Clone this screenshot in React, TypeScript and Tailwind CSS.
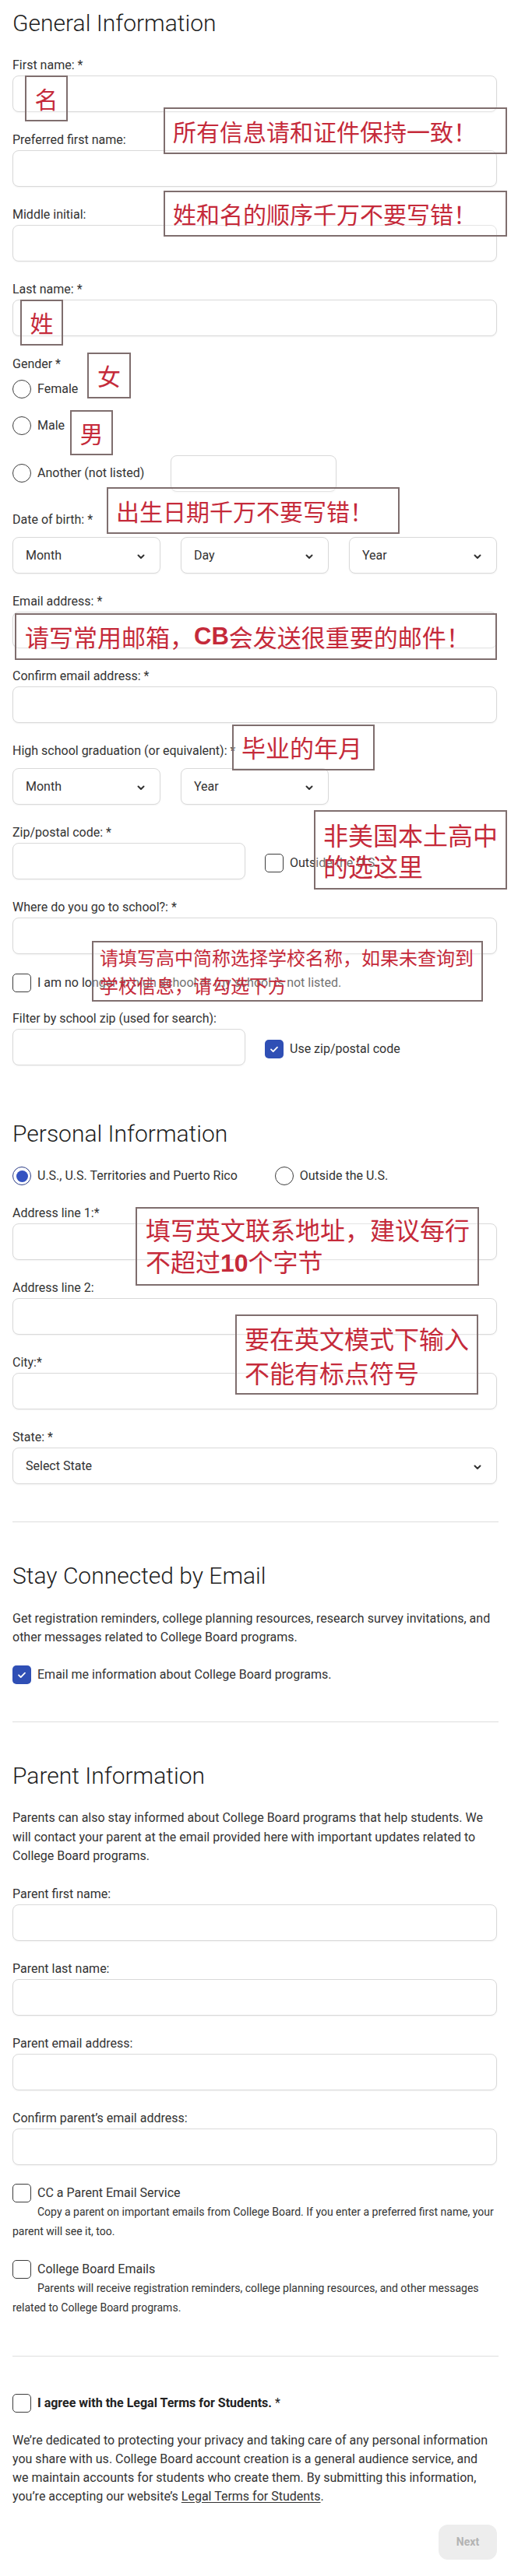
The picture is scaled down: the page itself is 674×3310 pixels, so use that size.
import React from 'react'

function Label({ children }: { children: React.ReactNode }) {
  return <div className="h-6 text-[16px] leading-6 text-[#333]">{children}</div>
}

function TextBox({ className = 'w-full' }: { className?: string }) {
  return (
    <input
      type="text"
      className={`mt-px block h-[47px] rounded-lg border border-[#d9d9d9] bg-white shadow-[0_1px_2px_rgba(0,0,0,0.05)] outline-none ${className}`}
    />
  )
}

function Field({ label, className = 'mt-6' }: { label: string; className?: string }) {
  return (
    <div className={className}>
      <Label>{label}</Label>
      <TextBox />
    </div>
  )
}

function Chevron() {
  return (
    <svg width="10" height="7" viewBox="0 0 10 7" className="mt-1 shrink-0">
      <path d="M1.5 1.5l3.5 3.5 3.5-3.5" fill="none" stroke="#333" strokeWidth="2" strokeLinecap="round" strokeLinejoin="round" />
    </svg>
  )
}

function SelectBox({ label, className = 'w-full' }: { label: string; className?: string }) {
  return (
    <div
      className={`flex h-[47px] items-center justify-between rounded-lg border border-[#d9d9d9] bg-white pl-4 pr-[19px] text-[16px] text-[#333] shadow-[0_1px_2px_rgba(0,0,0,0.05)] ${className}`}
    >
      <span>{label}</span>
      <Chevron />
    </div>
  )
}

function Box({ checked = false }: { checked?: boolean }) {
  if (checked) {
    return (
      <span className="flex h-6 w-6 shrink-0 items-center justify-center rounded-[5px] bg-[#2f4fb5]">
        <svg width="14" height="14" viewBox="0 0 14 14">
          <path d="M3 7.4l2.7 2.7L11 4.6" fill="none" stroke="#fff" strokeWidth="1.8" strokeLinecap="round" strokeLinejoin="round" />
        </svg>
      </span>
    )
  }
  return <span className="h-6 w-6 shrink-0 rounded-[5px] border-[1.5px] border-[#3d3d3d] bg-white" />
}

function Radio({ checked = false }: { checked?: boolean }) {
  return (
    <span
      className={`flex h-6 w-6 shrink-0 items-center justify-center rounded-full border-[1.5px] ${
        checked ? 'border-[#2b3c86]' : 'border-[#3d3d3d]'
      }`}
    >
      {checked && <span className="h-[15px] w-[15px] rounded-full bg-[#3553c1]" />}
    </span>
  )
}

function Option({ children }: { children: React.ReactNode }) {
  return <span className="text-[16px] leading-6 text-[#333]">{children}</span>
}

function Heading({ children, className = '' }: { children: React.ReactNode; className?: string }) {
  return <h2 className={`h-9 text-[30px] font-light leading-9 text-[#1f1f1f] ${className}`}>{children}</h2>
}

function Note({ className, children }: { className: string; children: React.ReactNode }) {
  return (
    <div
      className={`absolute flex border-2 border-[#7f6e6e] bg-white/30 font-['Noto_Sans_CJK_SC',sans-serif] text-[#c52a3a] ${className}`}
    >
      {children}
    </div>
  )
}

const bold = "font-['Liberation_Sans',sans-serif] font-bold"

export default function App() {
  return (
    <div className="relative h-[3310px] w-[674px] overflow-hidden bg-white font-['Roboto','Noto_Sans_CJK_SC',sans-serif]">
      <div className="w-[638px] pl-4 pt-3">
        <Heading>General Information</Heading>

        <Field label="First name: *" />
        <Field label="Preferred first name:" />
        <Field label="Middle initial:" />
        <Field label="Last name: *" />

        <div className="mt-6">
          <Label>Gender *</Label>
          <div className="mt-2 flex flex-col">
            <div className="mb-[23px] flex h-6 items-center gap-2">
              <Radio />
              <Option>Female</Option>
            </div>
            <div className="mb-[25px] flex h-6 items-center gap-2">
              <Radio />
              <Option>Male</Option>
            </div>
            <div className="flex items-center gap-2">
              <Radio />
              <Option>Another (not listed)</Option>
              <TextBox className="ml-[26px] w-[213px]" />
            </div>
          </div>
        </div>

        <div className="mt-6">
          <Label>Date of birth: *</Label>
          <div className="mt-[10px] flex gap-[26px]">
            <SelectBox label="Month" className="w-[190px]" />
            <SelectBox label="Day" className="w-[190px]" />
            <SelectBox label="Year" className="w-[190px]" />
          </div>
        </div>

        <Field label="Email address: *" />
        <Field label="Confirm email address: *" />

        <div className="mt-6">
          <Label>High school graduation (or equivalent): *</Label>
          <div className="mt-[10px] flex gap-[26px]">
            <SelectBox label="Month" className="w-[190px]" />
            <SelectBox label="Year" className="w-[190px]" />
          </div>
        </div>

        <div className="mt-6">
          <Label>Zip/postal code: *</Label>
          <div className="flex items-start">
            <TextBox className="w-[299px]" />
            <div className="ml-[25px] mt-[15px] flex items-center gap-2">
              <Box />
              <Option>Outside the U.S.</Option>
            </div>
          </div>
        </div>

        <Field label="Where do you go to school?: *" />

        <div className="mt-[25px] flex h-6 items-center gap-2">
          <Box />
          <Option>I am no longer in high school or my school is not listed.</Option>
        </div>

        <div className="mt-[22px]">
          <Label>Filter by school zip (used for search):</Label>
          <div className="flex items-start">
            <TextBox className="w-[299px]" />
            <div className="ml-[25px] mt-[15px] flex items-center gap-2">
              <Box checked />
              <Option>Use zip/postal code</Option>
            </div>
          </div>
        </div>

        <Heading className="mt-[70px]">Personal Information</Heading>

        <div className="mt-6 flex h-6 items-center">
          <div className="flex items-center gap-2">
            <Radio checked />
            <Option>U.S., U.S. Territories and Puerto Rico</Option>
          </div>
          <div className="ml-12 flex items-center gap-2">
            <Radio />
            <Option>Outside the U.S.</Option>
          </div>
        </div>

        <Field label="Address line 1:*" />
        <Field label="Address line 2:" />
        <Field label="City:*" />

        <div className="mt-6">
          <Label>State: *</Label>
          <SelectBox label="Select State" className="mt-px w-full" />
        </div>

        <div className="mt-12 h-px w-[624px] bg-[#dedede]" />

        <Heading className="mt-[51px]">Stay Connected by Email</Heading>
        <p className="mt-[25px] whitespace-nowrap text-[16px] leading-6 text-[#333]">
          Get registration reminders, college planning resources, research survey invitations, and
          <br />
          other messages related to College Board programs.
        </p>
        <div className="mt-6 flex h-6 items-center gap-2">
          <Box checked />
          <Option>Email me information about College Board programs.</Option>
        </div>

        <div className="mt-12 h-px w-[624px] bg-[#dedede]" />

        <Heading className="mt-[51px]">Parent Information</Heading>
        <p className="mt-6 whitespace-nowrap text-[16px] leading-[24.5px] text-[#333]">
          Parents can also stay informed about College Board programs that help students. We
          <br />
          will contact your parent at the email provided here with important updates related to
          <br />
          College Board programs.
        </p>

        <Field label="Parent first name:" />
        <Field label="Parent last name:" />
        <Field label="Parent email address:" />
        <Field label="Confirm parent’s email address:" />

        <div className="mt-6">
          <div className="flex h-6 items-center gap-2">
            <Box />
            <Option>CC a Parent Email Service</Option>
          </div>
          <p className="whitespace-nowrap indent-8 text-[14px] leading-[25px] text-[#333]">
            Copy a parent on important emails from College Board. If you enter a preferred first name, your
            <br />
            parent will see it, too.
          </p>
        </div>

        <div className="mt-6">
          <div className="flex h-6 items-center gap-2">
            <Box />
            <Option>College Board Emails</Option>
          </div>
          <p className="whitespace-nowrap indent-8 text-[14px] leading-[25px] text-[#333]">
            Parents will receive registration reminders, college planning resources, and other messages
            <br />
            related to College Board programs.
          </p>
        </div>

        <div className="mt-[49px] h-px w-[624px] bg-[#dedede]" />

        <div className="mt-12 flex h-6 items-center gap-2">
          <Box />
          <span className="text-[16px] leading-6 text-[#222]">
            <span className="font-bold">I agree with the Legal Terms for Students.</span> *
          </span>
        </div>

        <p className="mt-6 whitespace-nowrap text-[16px] leading-6 text-[#333]">
          We’re dedicated to protecting your privacy and taking care of any personal information
          <br />
          you share with us. College Board account creation is a general audience service, and
          <br />
          we maintain accounts for students who create them. By submitting this information,
          <br />
          you’re accepting our website’s <span className="underline underline-offset-2">Legal Terms for Students</span>.
        </p>

        <div className="mt-6 flex justify-end">
          <button
            type="button"
            className="h-[45px] w-[75px] rounded-xl bg-[#ededed] text-[14px] font-bold text-[#b3b3b3]"
          >
            Next
          </button>
        </div>
      </div>

      <Note className="left-[32px] top-[97px] h-[59px] w-[55px] items-center justify-center text-[30px]">名</Note>
      <Note className="left-[210px] top-[138px] h-[60px] w-[441px] items-center pl-[10px] text-[30px]">
        所有信息请和证件保持一致！
      </Note>
      <Note className="left-[210px] top-[245px] h-[59px] w-[441px] items-center pl-[10px] text-[30px]">
        姓和名的顺序千万不要写错！
      </Note>
      <Note className="left-[26px] top-[385px] h-[59px] w-[55px] items-center justify-center text-[30px]">姓</Note>
      <Note className="left-[112px] top-[453px] h-[59px] w-[56px] items-center justify-center text-[30px]">女</Note>
      <Note className="left-[90px] top-[527px] h-[58px] w-[55px] items-center justify-center text-[30px]">男</Note>
      <Note className="left-[137px] top-[626px] h-[60px] w-[376px] items-center pl-[10px] text-[30px]">
        出生日期千万不要写错！
      </Note>
      <Note className="left-[19px] top-[788px] h-[60px] w-[619px] items-center pl-[11px] text-[31px]">
        请写常用邮箱，<span className={bold}>CB</span>会发送很重要的邮件！
      </Note>
      <Note className="left-[298px] top-[931px] h-[59px] w-[183px] items-center pl-[10px] text-[31px]">
        毕业的年月
      </Note>
      <Note className="left-[403px] top-[1041px] h-[102px] w-[248px] flex-col justify-center pl-[10px] text-[32px] leading-[40px]">
        <span>非美国本土高中</span>
        <span>的选这里</span>
      </Note>
      <Note className="left-[118px] top-[1209px] h-[78px] w-[502px] flex-col justify-center pl-[8px] text-[24px] leading-[36px]">
        <span>请填写高中简称选择学校名称，如果未查询到</span>
        <span>学校信息，请勾选下方</span>
      </Note>
      <Note className="left-[174px] top-[1551px] h-[101px] w-[441px] flex-col justify-center pl-[11px] text-[32px] leading-[41px]">
        <span>填写英文联系地址，建议每行</span>
        <span>
          不超过<span className={bold}>10</span>个字节
        </span>
      </Note>
      <Note className="left-[302px] top-[1689px] h-[103px] w-[312px] flex-col justify-center pl-[10px] text-[32px] leading-[44px]">
        <span>要在英文模式下输入</span>
        <span>不能有标点符号</span>
      </Note>
    </div>
  )
}
